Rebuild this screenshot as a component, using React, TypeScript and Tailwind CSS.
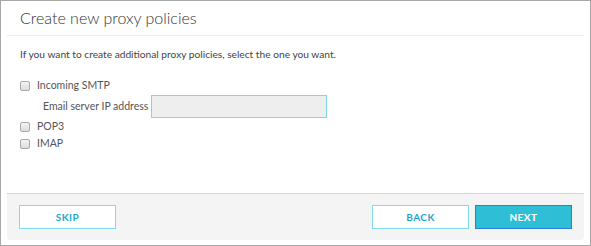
import { useState } from 'react';

function Box({ label, checked, onChange }: { label: string; checked: boolean; onChange: () => void }) {
  return (
    <label className="flex items-center gap-[7px] h-[17px] cursor-pointer">
      <span
        onClick={onChange}
        className={`w-[10px] h-[10px] rounded-[2px] border border-[#a9a9a9] bg-gradient-to-b from-[#f4f4f4] to-[#dcdcdc] ${checked ? 'bg-[#2ebfd6]' : ''}`}
      />
      <span className="text-[10.5px] text-[#555]">{label}</span>
    </label>
  );
}

export default function App() {
  const [smtp, setSmtp] = useState(false);
  const [pop3, setPop3] = useState(false);
  const [imap, setImap] = useState(false);

  return (
    <div className="w-[591px] h-[246px] border border-[#a8a8a8] bg-white flex flex-col font-['Lato',sans-serif]">
      <div className="mx-[6px] h-[35px] border-b border-[#ececec] flex items-center pl-[13px]">
        <h1 className="font-light text-[16px] text-[#333] leading-none">
          Create new proxy policies
        </h1>
      </div>
      <div className="flex-1 px-[19px] pt-[11px]">
        <p className="text-[10.2px] text-[#444]">
          If you want to create additional proxy policies, select the one you want.
        </p>
        <div className="mt-[15px] flex flex-col">
          <Box label="Incoming SMTP" checked={smtp} onChange={() => setSmtp(!smtp)} />
          <div className="flex items-center gap-[3px] pl-[23px] mt-[1px]">
            <span className="text-[10.5px] text-[#555]">Email server IP address</span>
            <input className="w-[176px] h-[23px] border border-[#7fd8e8] bg-[#eeeeee] outline-none" />
          </div>
          <Box label="POP3" checked={pop3} onChange={() => setPop3(!pop3)} />
          <Box label="IMAP" checked={imap} onChange={() => setImap(!imap)} />
        </div>
      </div>
      <div className="mx-[6px] mb-[5px] h-[47px] border-t border-[#d6d6d6] bg-[#f4f4f4] rounded-b-[4px] flex items-center justify-between px-[12px]">
        <button className="w-[97px] h-[24px] border border-[#7fdcef] bg-white text-[#1da8d0] text-[10px] font-bold tracking-[0.5px]">
          SKIP
        </button>
        <div className="flex gap-[6px]">
          <button className="w-[97px] h-[24px] border border-[#7fdcef] bg-white text-[#1da8d0] text-[10px] font-bold tracking-[0.5px]">
            BACK
          </button>
          <button className="w-[97px] h-[24px] border border-[#2a7de1] bg-[#2ebfd6] text-white text-[10px] font-bold tracking-[0.5px]">
            NEXT
          </button>
        </div>
      </div>
    </div>
  );
}
